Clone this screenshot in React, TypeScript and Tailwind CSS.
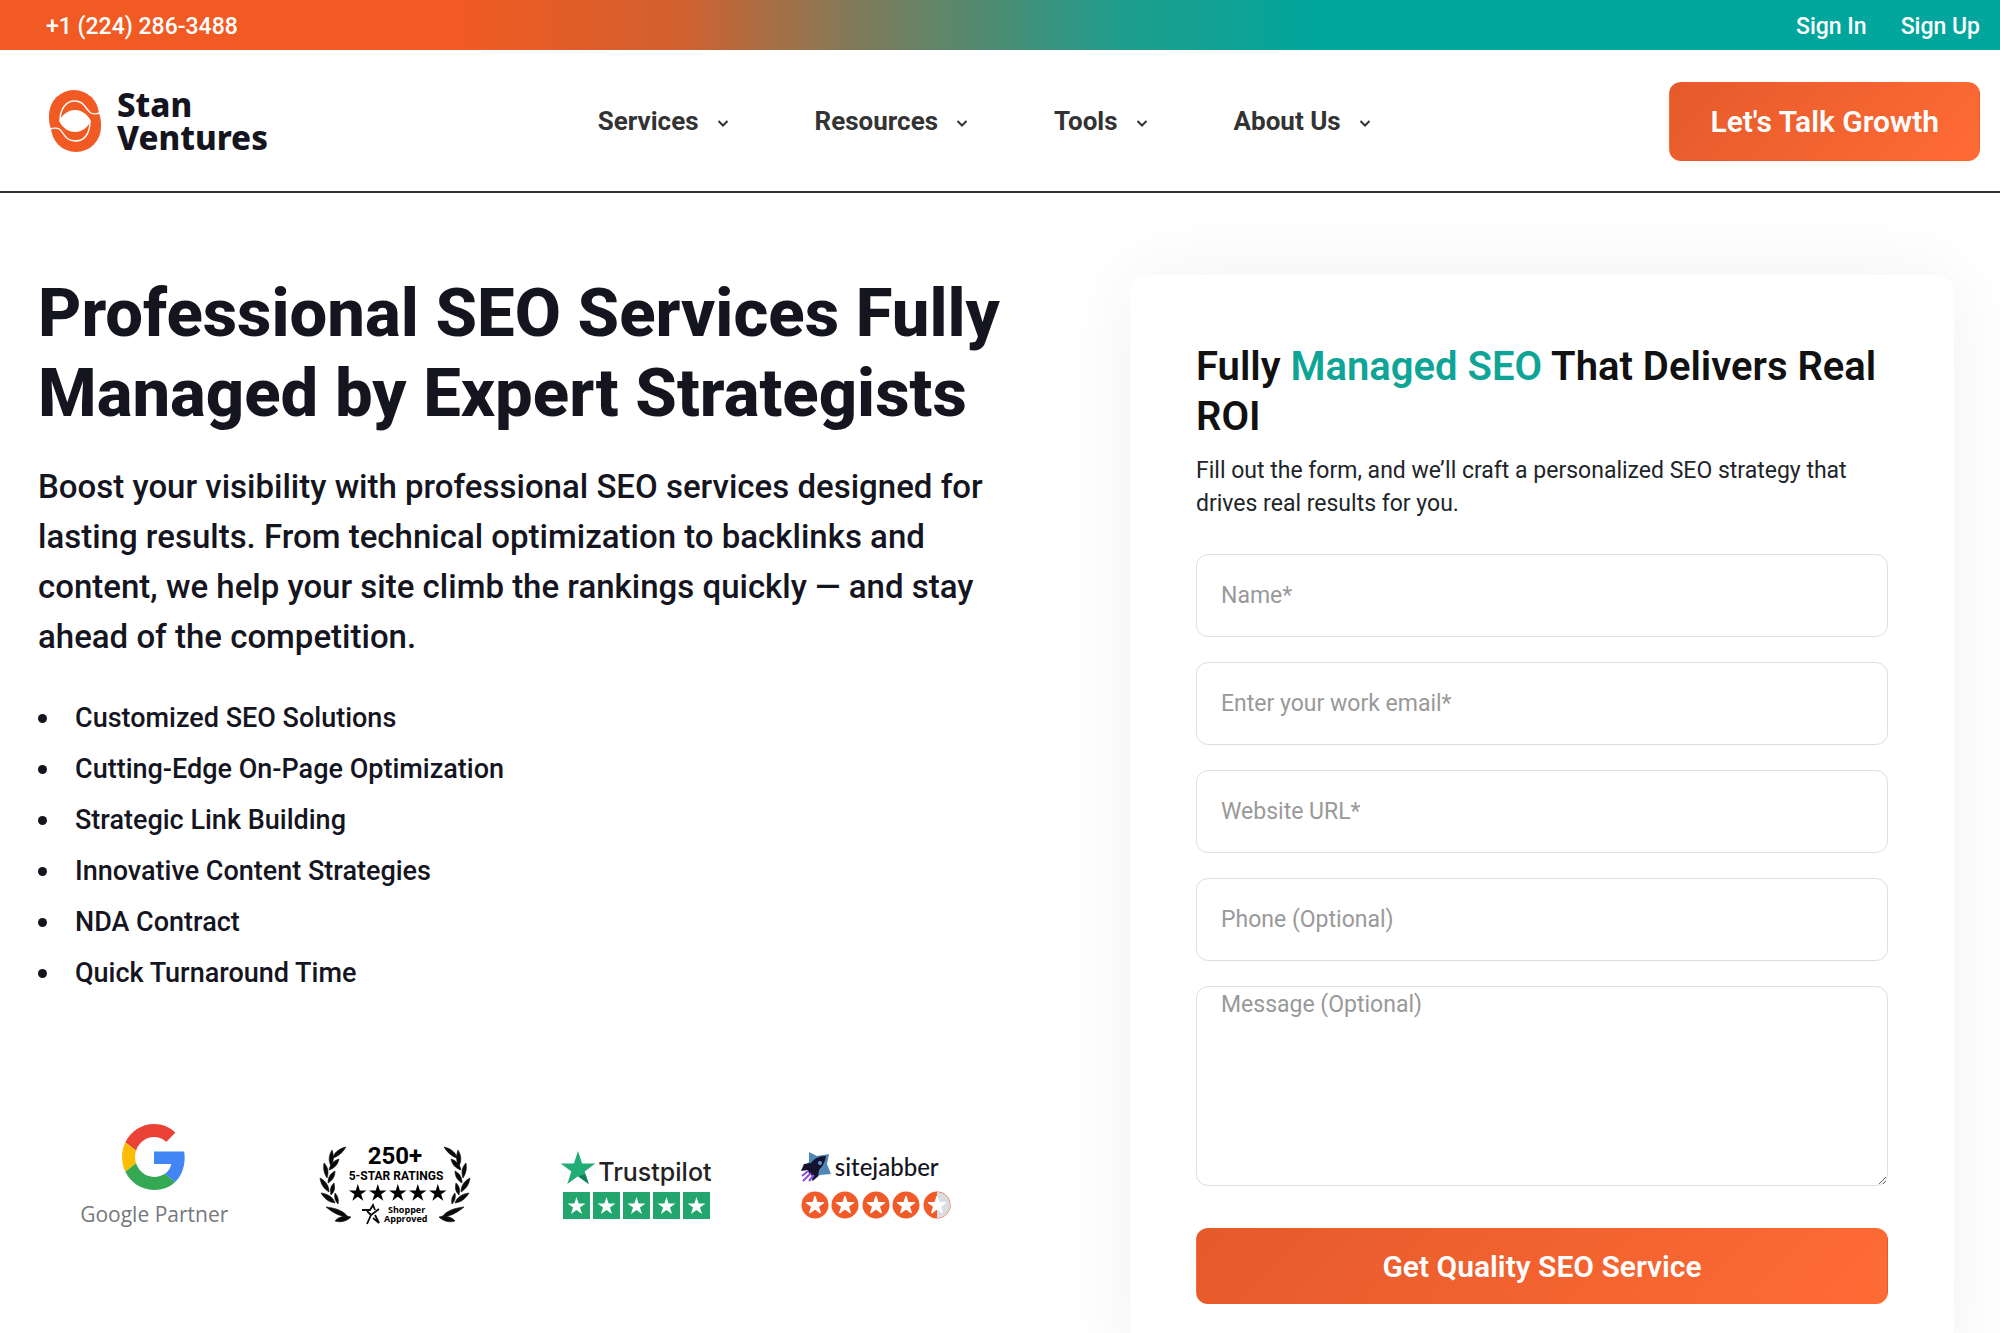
const navItems = ["Services", "Resources", "Tools", "About Us"];

const benefits = [
  "Customized SEO Solutions",
  "Cutting-Edge On-Page Optimization",
  "Strategic Link Building",
  "Innovative Content Strategies",
  "NDA Contract",
  "Quick Turnaround Time",
];

const fields = [
  { id: "name", label: "Name*", type: "text" },
  { id: "email", label: "Enter your work email*", type: "email" },
  { id: "website", label: "Website URL*", type: "url" },
  { id: "phone", label: "Phone (Optional)", type: "tel" },
];

// five-pointed star on a 20x20 box
const STAR = "M10 0l2.36 7.26H20l-6.18 4.49 2.36 7.26L10 14.53l-6.18 4.48 2.36-7.26L0 7.26h7.64z";

function StanLogo() {
  return (
    <a href="#home" aria-label="Stan Ventures" className="flex w-[250px] items-center gap-4">
      <svg viewBox="0 0 52 62" className="h-[62px] w-[52px] shrink-0" aria-hidden="true">
        <rect x="0" y="0" width="50" height="54" rx="25" fill="#f15a22" />
        <rect x="2" y="8" width="50" height="54" rx="25" fill="#f15a22" />
        <path d="M10 31c4-7 9-11 16-11s12 4 16 11c-4 7-9 11-16 11s-12-4-16-11z" fill="#fff" />
        <path d="M11 31c0-12 6-20 14.500-20C35 11 36 18 41 22.500c3 2 6 2 11 0" fill="none" stroke="#fff" strokeWidth="1.400" />
        <path d="M41 31c0 12-5 20-14.500 20C17 51 15 44 11 39.500c-3-2-6-2-11 0" fill="none" stroke="#fff" strokeWidth="1.400" />
      </svg>
      <span className="font-['Noto_Sans'] text-[33px] leading-[33px] font-extrabold text-[#15151f]">
        Stan
        <br />
        Ventures
      </span>
    </a>
  );
}

function GooglePartner() {
  return (
    <div className="flex w-[150px] flex-col items-center">
      <svg viewBox="0 0 48 48" className="h-[66px] w-16" preserveAspectRatio="none" aria-hidden="true">
        <path fill="#EA4335" d="M24 9.500c3.540 0 6.710 1.220 9.210 3.600l6.850-6.850C35.900 2.380 30.470 0 24 0 14.620 0 6.510 5.380 2.560 13.220l7.980 6.190C12.430 13.720 17.740 9.500 24 9.500z" />
        <path fill="#4285F4" d="M46.980 24.550c0-1.570-.15-3.090-.38-4.550H24v9.020h12.940c-.58 2.960-2.260 5.480-4.780 7.180l7.730 6c4.510-4.180 7.090-10.360 7.090-17.650z" />
        <path fill="#FBBC05" d="M10.530 28.590c-.48-1.450-.76-2.990-.76-4.590s.27-3.140.76-4.590l-7.980-6.190C.92 16.460 0 20.120 0 24c0 3.880.92 7.540 2.560 10.780l7.970-6.190z" />
        <path fill="#34A853" d="M24 48c6.480 0 11.930-2.130 15.890-5.810l-7.730-6c-2.150 1.450-4.920 2.300-8.160 2.300-6.260 0-11.570-4.220-13.470-9.910l-7.980 6.190C6.510 42.620 14.620 48 24 48z" />
      </svg>
      <span className="mt-2 font-['Open_Sans'] text-[21px] leading-8 font-medium whitespace-nowrap text-[#75787c]">
        Google Partner
      </span>
    </div>
  );
}

const leaves = [
  "M26 1C18 3 14 7 13 12c6-2 10-6 13-11z",
  "M12 4c-3 5-4 10-1 16 3-5 3-10 1-16z",
  "M19 13c-6 2-9 6-10 11 6-2 9-6 10-11z",
  "M4 17c-1 6 0 10 3 15 2-6 1-11-3-15z",
  "M15 25c-5 3-7 6-7 12 5-3 7-7 7-12z",
  "M0 32c1 6 3 10 9 14 0-6-3-11-9-14z",
  "M14 37c-4 4-4 7-3 12 4-4 4-7 3-12z",
  "M1 47c3 5 7 9 14 10-2-6-7-9-14-10z",
  "M15 47c-1 4 0 8 3 11 1-4 0-8-3-11z",
  "M6 61c6 5 12 9 22 10-4-6-12-9-22-10z",
  "M15 75c6 2 12 0 16-4-6-2-13 0-16 4z",
];

function Laurel() {
  return (
    <g fill="#0a0a0a" stroke="#0a0a0a" strokeWidth=".6">
      {leaves.map((d) => (
        <path key={d} d={d} />
      ))}
    </g>
  );
}

function ShopperApproved() {
  return (
    <svg viewBox="0 0 150 78" className="h-[78px] w-[150px] overflow-visible" role="img" aria-label="250+ 5-star ratings, Shopper Approved">
      <Laurel />
      <g transform="translate(150 0) scale(-1 1)">
        <Laurel />
      </g>
      <text x="75" y="18" textAnchor="middle" className="font-['Roboto'] text-[24px] font-bold">250+</text>
      <text x="76" y="34" textAnchor="middle" className="font-['Roboto'] text-[12px] font-bold">5-STAR RATINGS</text>
      {[0, 1, 2, 3, 4].map((i) => (
        <path key={i} d={STAR} transform={`translate(${29 + i * 20} 38) scale(.88)`} />
      ))}
      <path d="M42 64h8l3-5 2 5M59 63l-8 6-4 9M51 69l-4-4M55 69l4 8-6-5" fill="none" stroke="#0a0a0a" strokeWidth="1.800" />
      <text x="68" y="67" className="font-['Open_Sans'] text-[9px] font-bold">Shopper</text>
      <text x="64" y="76" className="font-['Open_Sans'] text-[9px] font-bold">Approved</text>
    </svg>
  );
}

function Trustpilot() {
  return (
    <div className="w-[150px]">
      <div className="flex items-end">
        <svg viewBox="0 0 20 19" className="h-[33px] w-9 shrink-0" aria-hidden="true">
          <path d={STAR} fill="#21ad76" />
          <path d="M10 14.530l4.400-1.100 1.780 5.580z" fill="#12805a" />
        </svg>
        <span className="ml-0.5 font-['Inter'] text-[25px] leading-6 font-medium text-[#222]">Trustpilot</span>
      </div>
      <div className="mt-2 flex justify-end gap-[3px]">
        {[0, 1, 2, 3, 4].map((i) => (
          <svg key={i} viewBox="0 0 27 27" className="h-[27px] w-[27px]" aria-hidden="true">
            <rect width="27" height="27" fill="#22a66e" />
            <path d={STAR} transform="translate(4.500 5) scale(.9)" fill="#fff" />
          </svg>
        ))}
      </div>
    </div>
  );
}

function Sitejabber() {
  return (
    <div className="w-[150px]">
      <div className="flex items-center">
        <svg viewBox="0 0 30 30" className="h-[30px] w-[30px] shrink-0" aria-hidden="true">
          <path d="M8 0l8 4 12-2-2 10 4 10-11 1-7 6-3-9-7-5 6-5z" fill="#4f86b5" />
          <path d="M25 4c-8 0-12 3-15 7l-7 1-3 7 7-1 1 4 4 1-1 6 6-5 1-6c4-4 6-8 7-14z" fill="#16122e" />
          <circle cx="19" cy="11" r="2" fill="#5b9bd0" />
          <path d="M7 19l-6 5M10 21l-8 8M13 23l-5 6" stroke="#8a4be0" strokeWidth="2" />
        </svg>
        <span className="ml-1 font-['Lato'] text-[24px] leading-8 font-medium text-[#15151f]">sitejabber</span>
      </div>
      <div className="mt-2 flex justify-between">
        {[0, 1, 2, 3, 4].map((i) => (
          <svg key={i} viewBox="0 0 28 28" className="h-7 w-7" aria-hidden="true">
            <circle cx="14" cy="14" r="13.500" fill="#f15a29" />
            {i === 4 && <path d="M14 1a13 13 0 0 1 0 26z" fill="#d9dee2" />}
            <path d={STAR} transform="translate(5.500 5.500) scale(.85)" fill="#fff" stroke="#fff" strokeWidth="1.500" strokeLinejoin="round" />
          </svg>
        ))}
      </div>
    </div>
  );
}

export default function App() {
  return (
    <div className="min-h-screen bg-white font-['Roboto',sans-serif] text-[#15151f]">
      {/* Top bar */}
      <div className="flex h-[50px] items-center justify-between bg-[linear-gradient(90deg,#f15a22_23%,#d2612f_34%,#7e7b5a_43%,#1f9d8c_56%,#00a69c_66%)] pt-1 pr-5 pl-[46px] text-[23px] font-medium text-white">
        <a href="tel:+12242863488">+1 (224) 286-3488</a>
        <div className="flex gap-[34px]">
          <a href="#signin">Sign In</a>
          <a href="#signup">Sign Up</a>
        </div>
      </div>

      {/* Header */}
      <header className="flex h-[143px] items-center justify-between border-b-2 border-[#333] pt-px pr-5 pl-[49px]">
        <StanLogo />
        <nav className="flex gap-[86px]">
          {navItems.map((item) => (
            <button key={item} className="flex items-center gap-[18px] text-[26px] font-bold text-[#333]">
              {item}
              <svg viewBox="0 0 12 12" className="mt-1 h-3 w-3" fill="none" stroke="currentColor" strokeWidth="2" aria-hidden="true">
                <path d="M1.500 4L6 8.500 10.500 4" />
              </svg>
            </button>
          ))}
        </nav>
        <a
          href="#contact"
          className="rounded-xl border border-transparent bg-[linear-gradient(135deg,#e55a2b,#ff6b35)] px-10 py-5 text-[30px] leading-[37px] font-semibold text-white"
        >
          Let's Talk Growth
        </a>
      </header>

      <main className="grid grid-cols-[1fr_824px] gap-[130px] pt-20 pr-[46px] pl-[38px]">
        <section>
          <h1 className="text-[67px] leading-[80px] font-extrabold">
            Professional SEO Services Fully Managed by Expert Strategists
          </h1>
          <p className="mt-[29px] text-[33px] leading-[50px] font-medium">
            Boost your visibility with professional SEO services designed for lasting results. From technical
            optimization to backlinks and content, we help your site climb the rankings quickly — and stay ahead of
            the competition.
          </p>
          <ul className="mt-9 space-y-[10px] text-[27px] leading-[41px] font-medium">
            {benefits.map((item) => (
              <li key={item} className="flex items-center gap-7 before:h-[9px] before:w-[9px] before:rounded-full before:bg-[#15151f]">
                {item}
              </li>
            ))}
          </ul>
          <div className="mt-[130px] mr-1 -ml-1 grid grid-cols-4 items-center justify-items-center">
            <GooglePartner />
            <div className="pt-4">
              <ShopperApproved />
            </div>
            <div className="pt-4">
              <Trustpilot />
            </div>
            <div className="pt-4">
              <Sitejabber />
            </div>
          </div>
        </section>

        <form className="mt-0.5 rounded-2xl bg-white px-[66px] py-[67px] shadow-[0_0_83px_rgba(0,0,0,0.06)]">
          <h2 className="text-[40px] leading-[50px] font-semibold text-[#111]">
            Fully <span className="text-[#0fa596]">Managed SEO</span> That Delivers Real ROI
          </h2>
          <p className="mt-3 text-[23px] leading-[33px] text-[#212529]">
            Fill out the form, and we’ll craft a personalized SEO strategy that drives real results for you.
          </p>
          <div className="mt-[34px] flex flex-col gap-[25px] text-[23px]">
            {fields.map((field) => (
              <input
                key={field.id}
                id={field.id}
                type={field.type}
                aria-label={field.label}
                placeholder={field.label}
                className="h-[83px] w-full rounded-xl border border-[#dedede] px-6 placeholder:text-[#999]"
              />
            ))}
            <textarea
              id="message"
              aria-label="Message (Optional)"
              placeholder="Message (Optional)"
              className="h-[200px] w-full resize rounded-xl border border-[#dedede] px-6 leading-[35px] placeholder:text-[#999]"
            />
          </div>
          <button
            type="submit"
            className="mt-[42px] h-[76px] w-full rounded-xl border border-transparent bg-[linear-gradient(135deg,#e55a2b,#ff6b35)] text-[30px] font-semibold text-white"
          >
            Get Quality SEO Service
          </button>
        </form>
      </main>
    </div>
  );
}
